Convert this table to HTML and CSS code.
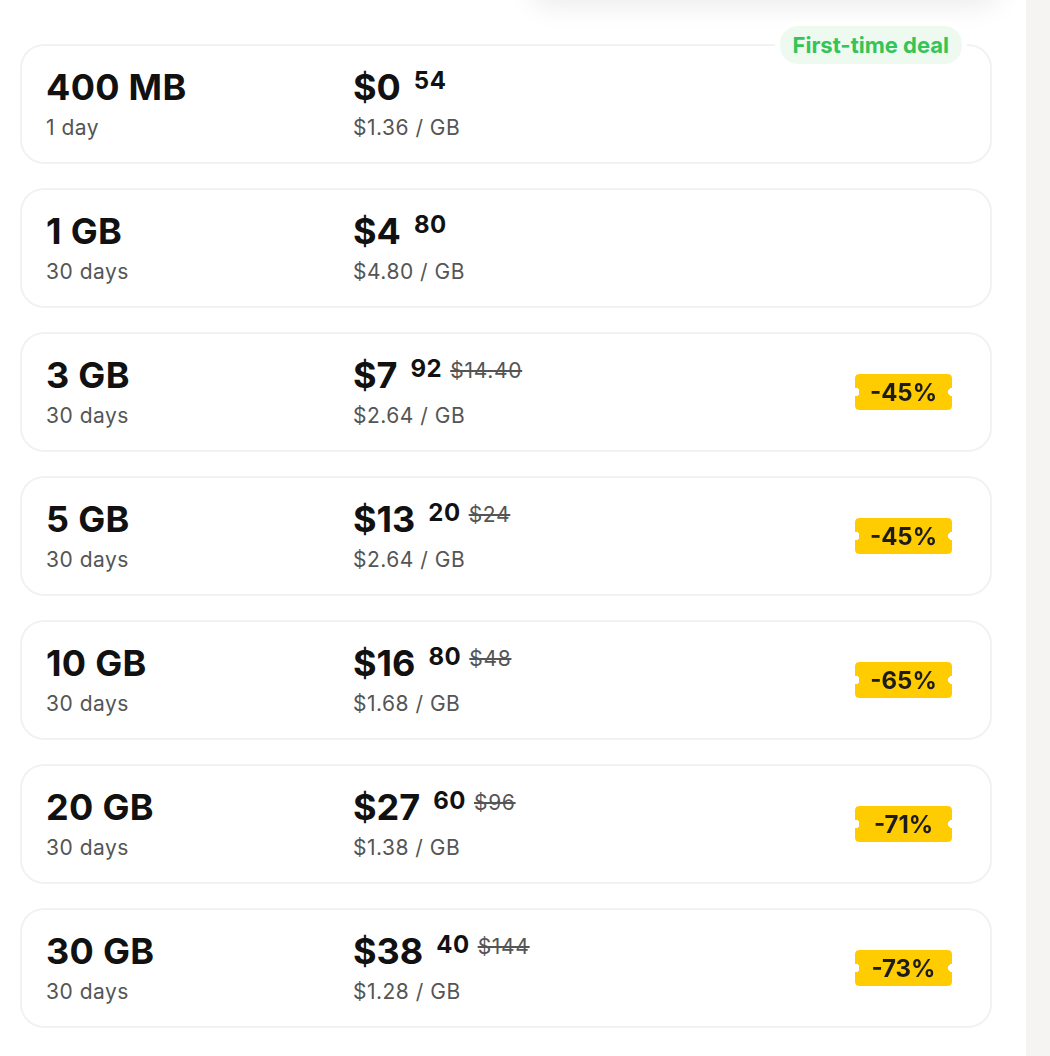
FILE: index.html
```html
<!DOCTYPE html>
<html lang="en">
<head>
<meta charset="utf-8">
<title>Plans</title>
<link rel="stylesheet" href="styles.css">
</head>
<body>
<div class="page">
  <main class="main">
    <div class="top-shadow"></div>
    <div class="plans">
      <div class="card">
        <div class="plan"><div class="size">400 MB</div><div class="sub">1 day</div></div>
        <div class="price"><div class="amount"><span class="whole">$0</span><span class="cents">54</span></div><div class="sub">$1.36 / GB</div></div>
        <div class="deal">First-time deal</div>
      </div>
      <div class="card">
        <div class="plan"><div class="size">1 GB</div><div class="sub">30 days</div></div>
        <div class="price"><div class="amount"><span class="whole">$4</span><span class="cents">80</span></div><div class="sub">$4.80 / GB</div></div>
      </div>
      <div class="card">
        <div class="plan"><div class="size">3 GB</div><div class="sub">30 days</div></div>
        <div class="price"><div class="amount"><span class="whole">$7</span><span class="cents">92</span><s class="old">$14.40</s></div><div class="sub">$2.64 / GB</div></div>
        <div class="ticket">-45%</div>
      </div>
      <div class="card">
        <div class="plan"><div class="size">5 GB</div><div class="sub">30 days</div></div>
        <div class="price"><div class="amount"><span class="whole">$13</span><span class="cents">20</span><s class="old">$24</s></div><div class="sub">$2.64 / GB</div></div>
        <div class="ticket">-45%</div>
      </div>
      <div class="card">
        <div class="plan"><div class="size">10 GB</div><div class="sub">30 days</div></div>
        <div class="price"><div class="amount"><span class="whole">$16</span><span class="cents">80</span><s class="old">$48</s></div><div class="sub">$1.68 / GB</div></div>
        <div class="ticket">-65%</div>
      </div>
      <div class="card">
        <div class="plan"><div class="size">20 GB</div><div class="sub">30 days</div></div>
        <div class="price"><div class="amount"><span class="whole">$27</span><span class="cents">60</span><s class="old">$96</s></div><div class="sub">$1.38 / GB</div></div>
        <div class="ticket">-71%</div>
      </div>
      <div class="card">
        <div class="plan"><div class="size">30 GB</div><div class="sub">30 days</div></div>
        <div class="price"><div class="amount"><span class="whole">$38</span><span class="cents">40</span><s class="old">$144</s></div><div class="sub">$1.28 / GB</div></div>
        <div class="ticket">-73%</div>
      </div>
    </div>
  </main>
  <aside class="side"></aside>
</div>
</body>
</html>
```
FILE: styles.css
```css
* { box-sizing: border-box; }
html, body { margin: 0; padding: 0; }
body {
  font-family: Inter, "Noto Sans", "Liberation Sans", sans-serif;
  background: #ffffff;
  color: #111111;
}
.page {
  display: flex;
  min-height: 1056px;
}
.main {
  flex: 1;
  position: relative;
  overflow: hidden;
  background: #fff;
}
.side {
  width: 24px;
  background: #f6f4f2;
}
.top-shadow {
  position: absolute;
  top: -50px;
  left: 530px;
  width: 470px;
  height: 50px;
  border-radius: 20px;
  background: #fff;
  box-shadow: 0 6px 28px rgba(0, 0, 0, 0.08);
}
.plans {
  display: flex;
  flex-direction: column;
  gap: 24px;
  padding: 44px 34px 0 20px;
}
.card {
  position: relative;
  height: 120px;
  border: 2px solid #f2f2f2;
  border-radius: 24px;
  padding: 21px 38px 21px 24px;
  display: grid;
  grid-template-columns: 307px 1fr auto;
  align-items: start;
  background: #fff;
}
.size {
  font-size: 36px;
  line-height: 40px;
  font-weight: 700;
  letter-spacing: 0.3px;
  color: #111;
}
.sub {
  margin-top: 8px;
  font-size: 21px;
  line-height: 26px;
  letter-spacing: 0.5px;
  color: #555;
}
.amount {
  display: flex;
  align-items: flex-start;
  height: 40px;
}
.whole {
  font-size: 36px;
  line-height: 40px;
  font-weight: 700;
  color: #111;
}
.cents {
  margin-left: 13px;
  font-size: 24px;
  line-height: 28px;
  font-weight: 700;
  letter-spacing: 0.5px;
  color: #111;
}
.old {
  margin-left: 8px;
  margin-top: 3px;
  font-size: 21px;
  line-height: 26px;
  letter-spacing: 0.7px;
  color: #555;
}
.ticket {
  align-self: center;
  width: 97px;
  height: 36px;
  display: flex;
  align-items: center;
  justify-content: center;
  background: #ffcc02;
  border-radius: 4px;
  font-size: 24px;
  font-weight: 700;
  color: #1c1c1c;
  -webkit-mask:
    radial-gradient(circle 4.5px at left, #0000 96%, #000) left / 51% 100% no-repeat,
    radial-gradient(circle 4.5px at right, #0000 96%, #000) right / 51% 100% no-repeat;
  mask:
    radial-gradient(circle 4.5px at left, #0000 96%, #000) left / 51% 100% no-repeat,
    radial-gradient(circle 4.5px at right, #0000 96%, #000) right / 51% 100% no-repeat;
}
.deal {
  position: absolute;
  top: -20px;
  right: 28px;
  height: 38px;
  padding: 0 13px;
  display: flex;
  align-items: center;
  border-radius: 18px;
  background: #eefaf0;
  box-shadow: 0 0 0 5px #fff;
  color: #34c457;
  font-size: 22px;
  font-weight: 700;
  color: #34c457;
}
```
